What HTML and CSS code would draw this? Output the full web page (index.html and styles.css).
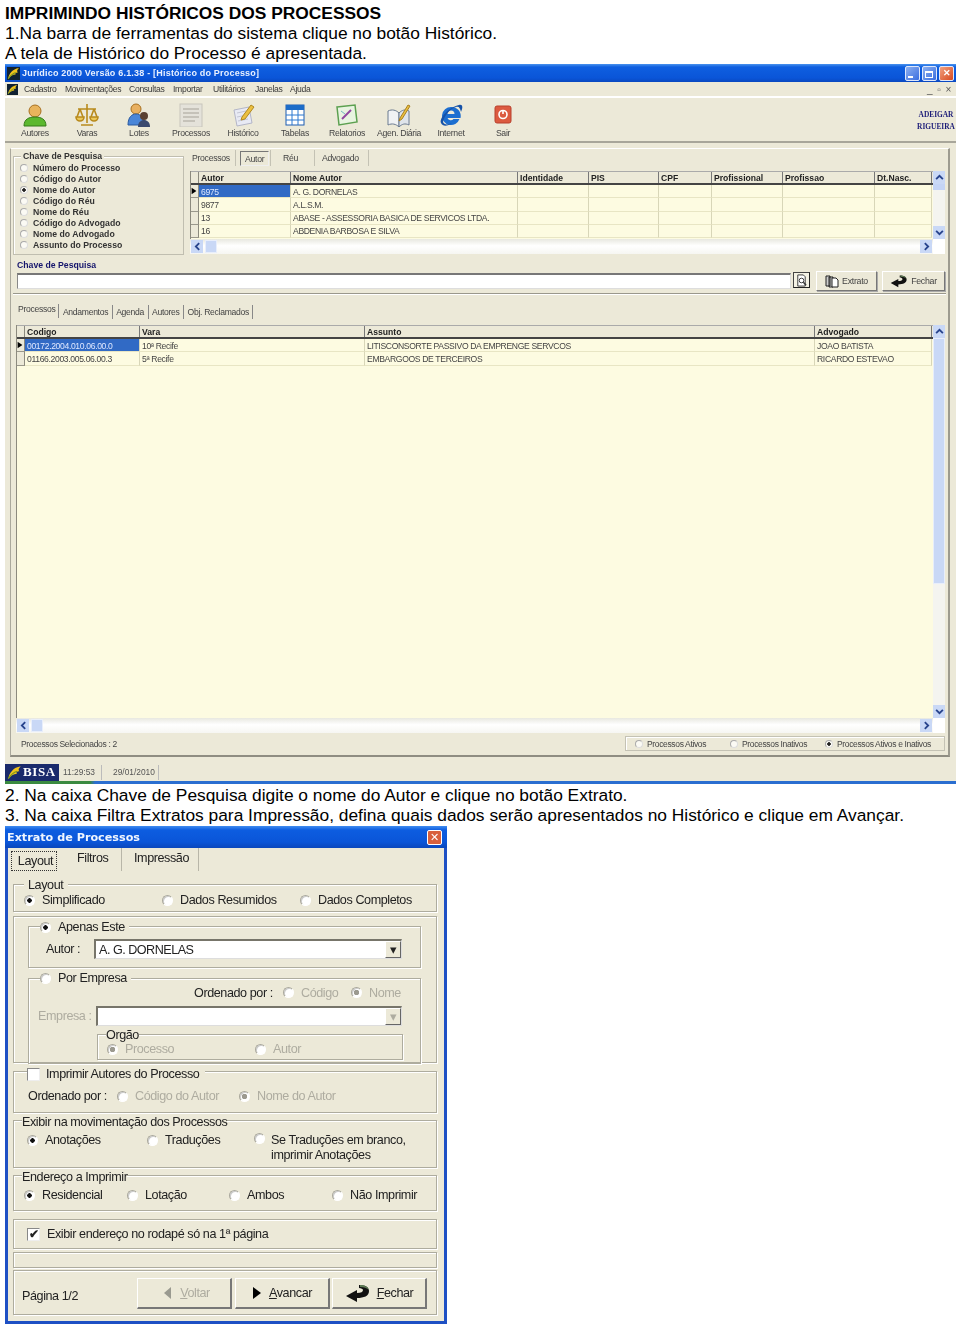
FILE: index.html
```html
<!DOCTYPE html>
<html lang="pt">
<head>
<meta charset="utf-8">
<title>Imprimindo históricos dos processos</title>
<link rel="stylesheet" href="styles.css">
</head>
<body>
<svg class="defs" width="0" height="0">
  <defs>
    <symbol id="flame" viewBox="0 0 12 12"><path d="M1 11C2 6 5 2 11 1 9 3 9 4 10 5 8 5 7 6 8 7 5 7 3 9 1 11Z" fill="#f2c21a"/><path d="M1 11C3 8 5 6 8 5" stroke="#7a9a20" fill="none"/></symbol>
    <symbol id="turn" viewBox="0 0 26 20"><path d="M14 2c6 0 10 2 10 6 0 5-5 7-12 7v4L1 13l11-6v3c4 0 6-1 6-3 0-1-2-2-4-2Z" fill="#111"/><path d="M15 2c5 0 8 2 9 5-2-2-5-3-9-3Z" fill="#5c7a52"/></symbol>
    <symbol id="radar" viewBox="0 0 10 10"><path d="M2 1 8 5 2 9Z" fill="#000"/></symbol>
    <symbol id="up" viewBox="0 0 8 8"><path d="M1 5.500 4 2.500l3 3" fill="none" stroke="#27438c" stroke-width="1.600"/></symbol>
    <symbol id="down" viewBox="0 0 8 8"><path d="M1 2.500 4 5.500l3-3" fill="none" stroke="#27438c" stroke-width="1.600"/></symbol>
    <symbol id="left" viewBox="0 0 8 8"><path d="M5.500 1 2.500 4l3 3" fill="none" stroke="#27438c" stroke-width="1.600"/></symbol>
    <symbol id="right" viewBox="0 0 8 8"><path d="M2.500 1l3 3-3 3" fill="none" stroke="#27438c" stroke-width="1.600"/></symbol>
  </defs>
</svg>

<h1 class="line heading">IMPRIMINDO HISTÓRICOS DOS PROCESSOS</h1>
<p class="line">1.Na barra de ferramentas do sistema clique no botão Histórico.</p>
<p class="line">A tela de Histórico do Processo é apresentada.</p>

<section class="win1">
  <header class="title1">
    <svg class="title-ico"><use href="#flame"/></svg>
    <span class="title1-text">Jurídico 2000 Versão 6.1.38 - [Histórico do Processo]</span>
    <span class="wbtns">
      <span class="wbtn"><i class="min"></i></span><span class="wbtn"><i class="max"></i></span><span class="wbtn close">✕</span>
    </span>
  </header>
  <nav class="menu">
    <svg class="menu-ico"><use href="#flame"/></svg>
    <span class="m1">Cadastro</span><span class="m2">Movimentações</span><span class="m3">Consultas</span><span class="m4">Importar</span><span class="m5">Utilitários</span><span class="m6">Janelas</span><span class="m7">Ajuda</span>
    <span class="mdi">_ &nbsp;▫ &nbsp;×</span>
  </nav>
  <div class="toolbar">
    <div class="tool"><svg class="ico" viewBox="0 0 24 24"><circle cx="12" cy="8" r="6" fill="#e8b45c" stroke="#a87020"/><path d="M1 23c0-7 5-9 11-9s11 2 11 9Z" fill="#5cb82e" stroke="#357a18"/></svg><span>Autores</span></div>
    <div class="tool"><svg class="ico" viewBox="0 0 24 24" fill="none" stroke="#b88a1c" stroke-width="1.6"><path d="M12 1v19M6 22h12M3 6h18M5 6 2 14M5 6l3 8M19 6l-3 8M19 6l3 8"/><path d="M1 14h8a4 4 0 0 1-8 0ZM15 14h8a4 4 0 0 1-8 0Z" fill="#ecc85a"/></svg><span>Varas</span></div>
    <div class="tool"><svg class="ico" viewBox="0 0 24 24"><circle cx="9" cy="6" r="5" fill="#e8b060" stroke="#a87020"/><path d="M1 22c0-8 4-11 8-11s8 3 8 11Z" fill="#4a86d8" stroke="#2a5aa0"/><circle cx="17" cy="13" r="4" fill="#5a4030"/><path d="M11 24c0-5 3-7 6-7s6 2 6 7Z" fill="#3a4a70"/></svg><span>Lotes</span></div>
    <div class="tool"><svg class="ico" viewBox="0 0 24 24"><rect x="1" y="1" width="22" height="23" fill="#e4e2da" stroke="#c8c6bc"/><path d="M4 6h16M4 10h16M4 14h16M4 18h12" stroke="#bab8ae" stroke-width="1.5"/></svg><span>Processos</span></div>
    <div class="tool"><svg class="ico" viewBox="0 0 24 24"><path d="M3 7 18 4l3 16-15 3Z" fill="#e8eaf4" stroke="#b4b6c8"/><path d="M6 10l9-2M6 14l10-2M7 18l10-2" stroke="#c4c6d4"/><path d="M11 14 20 2l3 2-9 12-4 1Z" fill="#ecc040" stroke="#b08820"/></svg><span>Histórico</span></div>
    <div class="tool"><svg class="ico" viewBox="0 0 24 24"><rect x="3" y="2" width="18" height="20" fill="#fff" stroke="#1c5cb0"/><rect x="3" y="2" width="18" height="5" fill="#1c6cc8"/><path d="M9 7v15M15 7v15M3 12h18M3 17h18" stroke="#2a78d0"/></svg><span>Tabelas</span></div>
    <div class="tool"><svg class="ico" viewBox="0 0 24 24"><path d="M2 4 20 2l2 17-18 3Z" fill="#e8f4e0" stroke="#5ca050" stroke-width="1.5"/><path d="M7 16l9-9" stroke="#9048a0" stroke-width="2"/><path d="M6 8l4 3" stroke="#70b8c0"/></svg><span>Relatorios</span></div>
    <div class="tool"><svg class="ico" viewBox="0 0 24 24"><path d="M1 8c4-2 8-1 11 2v14c-3-3-7-4-11-2Z" fill="#f0f2f4" stroke="#6a7a90"/><path d="M12 10c3-3 6-4 10-2v14c-4-2-7-1-10 2Z" fill="#dfe4ea" stroke="#6a7a90"/><path d="M13 15 21 2l2 1-8 13-3 2Z" fill="#ecc040" stroke="#a88020"/></svg><span>Agen. Diária</span></div>
    <div class="tool"><svg class="ico" viewBox="0 0 24 24"><path d="M12 4a9 9 0 1 0 8.5 12h-6a3.500 3.500 0 0 1-6-1h13A9 9 0 0 0 12 4Zm-3.500 7a3.500 3.500 0 0 1 7 0Z" fill="#1c6ed0"/><path d="M2 20C0 15 10 4 20 2c4-1 4 3 2 7-1-4-2-6-5-5C10 6 5 14 4 19c1 3 5 3 9 1-4 3-9 4-11 0Z" fill="#1652a8"/></svg><span>Internet</span></div>
    <div class="tool"><svg class="ico" viewBox="0 0 24 24"><rect x="4" y="3" width="16" height="17" rx="2" fill="#dc5a40" stroke="#b8402c"/><circle cx="12" cy="11.500" r="4" fill="none" stroke="#fff" stroke-width="1.600"/><path d="M12 7v4" stroke="#fff" stroke-width="1.600"/></svg><span>Sair</span></div>
    <div class="user">ADEIGAR<br>RIGUEIRA</div>
  </div>

  <main class="workspace">
    <div class="panel">
      <div class="search-top">
        <div class="gbox keys">
          <div class="legend lg-keys">Chave de Pesquisa</div>
          <label class="rk"><i class="r"></i>Número do Processo</label>
          <label class="rk"><i class="r"></i>Código do Autor</label>
          <label class="rk"><i class="r on"></i>Nome do Autor</label>
          <label class="rk"><i class="r"></i>Código do Réu</label>
          <label class="rk"><i class="r"></i>Nome do Réu</label>
          <label class="rk"><i class="r"></i>Código do Advogado</label>
          <label class="rk"><i class="r"></i>Nome do Advogado</label>
          <label class="rk"><i class="r"></i>Assunto do Processo</label>
        </div>
        <div class="search-right">
          <div class="tabs1">
            <span class="t1 t-proc">Processos</span>
            <span class="t1 t-autor"><b>Autor</b></span>
            <span class="t1 t-reu">Réu</span>
            <span class="t1 t-adv">Advogado</span>
          </div>
          <div class="dgrid dg1">
            <div class="dg-main">
              <div class="row head cols1"><i></i><span>Autor</span><span>Nome Autor</span><span>Identidade</span><span>PIS</span><span>CPF</span><span>Profissional</span><span>Profissao</span><span>Dt.Nasc.</span></div>
              <div class="row cols1"><i class="cur"><svg><use href="#radar"/></svg></i><span class="sel">6975</span><span>A. G. DORNELAS</span><span></span><span></span><span></span><span></span><span></span><span></span></div>
              <div class="row cols1"><i></i><span>9877</span><span>A.L.S.M.</span><span></span><span></span><span></span><span></span><span></span><span></span></div>
              <div class="row cols1"><i></i><span>13</span><span>ABASE - ASSESSORIA BASICA DE SERVICOS LTDA.</span><span></span><span></span><span></span><span></span><span></span><span></span></div>
              <div class="row cols1"><i></i><span>16</span><span>ABDENIA BARBOSA E SILVA</span><span></span><span></span><span></span><span></span><span></span><span></span></div>
            </div>
            <div class="vbar"><b><svg><use href="#up"/></svg></b><em class="thumb-a"></em><u></u><b><svg><use href="#down"/></svg></b></div>
            <div class="hbar"><b><svg><use href="#left"/></svg></b><em></em><u></u><b><svg><use href="#right"/></svg></b></div>
          </div>
        </div>
      </div>

      <div class="key-label">Chave de Pesquisa</div>
      <div class="key-row">
        <div class="key-input"></div>
        <div class="find"><svg viewBox="0 0 14 14" fill="none" stroke="#333"><path d="M3 1h6l2 2v10H3Z" fill="#fff"/><circle cx="7" cy="7" r="2.500"/><path d="M9 9l3 3" stroke-width="1.500"/></svg></div>
        <div class="btn1 extrato"><svg viewBox="0 0 14 14"><path d="M1 2h4v10H1ZM4 3h4v10H4Z" fill="#ccc" stroke="#222"/><path d="M7 4h4l2 2v7H7Z" fill="#fff" stroke="#222"/></svg>Extrato</div>
        <div class="btn1 fechar1"><svg><use href="#turn"/></svg>Fechar</div>
      </div>
      <div class="groove"></div>

      <div class="tabs2">
        <span class="t2 active">Processos</span><span class="t2">Andamentos</span><span class="t2">Agenda</span><span class="t2">Autores</span><span class="t2">Obj. Reclamados</span>
      </div>
      <div class="dgrid dg2">
        <div class="dg-main">
          <div class="row head cols2"><i></i><span>Codigo</span><span>Vara</span><span>Assunto</span><span>Advogado</span></div>
          <div class="row cols2"><i class="cur"><svg><use href="#radar"/></svg></i><span class="sel">00172.2004.010.06.00.0</span><span>10ª Recife</span><span>LITISCONSORTE PASSIVO DA EMPRENGE SERVCOS</span><span>JOAO BATISTA</span></div>
          <div class="row cols2"><i></i><span>01166.2003.005.06.00.3</span><span>5ª Recife</span><span>EMBARGOOS DE TERCEIROS</span><span>RICARDO ESTEVAO</span></div>
        </div>
        <div class="vbar"><b><svg><use href="#up"/></svg></b><em class="thumb-b"></em><u></u><b><svg><use href="#down"/></svg></b></div>
        <div class="hbar"><b><svg><use href="#left"/></svg></b><em></em><u></u><b><svg><use href="#right"/></svg></b></div>
      </div>
      <div class="foot1">
        <span class="selected">Processos Selecionados : 2</span>
        <div class="status-box">
          <label class="rs rs1"><i class="r"></i>Processos Ativos</label>
          <label class="rs rs2"><i class="r"></i>Processos Inativos</label>
          <label class="rs"><i class="r on"></i>Processos Ativos e Inativos</label>
        </div>
      </div>
    </div>
  </main>

  <footer class="statusbar">
    <div class="logo"><svg><use href="#flame"/></svg><span>BISA</span></div>
    <span class="cell c-time">11:29:53</span>
    <span class="cell c-date">29/01/2010</span>
  </footer>
  <div class="taskstripe"></div>
</section>

<p class="line line-a">2. Na caixa Chave de Pesquisa digite o nome do Autor e clique no botão Extrato.</p>
<p class="line">3. Na caixa Filtra Extratos para Impressão, defina quais dados serão apresentados no Histórico e clique em Avançar.</p>

<section class="win2">
  <header class="title2"><span>Extrato de Processos</span><span class="close2">✕</span></header>
  <div class="tabs3">
    <span class="t3 active"><b>Layout</b></span><span class="t3 filtros">Filtros</span><span class="t3 impressao">Impressão</span>
  </div>

  <div class="g g-layout">
    <div class="lgd lgd-layout">Layout</div>
    <div class="opts opts-layout">
      <label class="o"><i class="rb on"></i>Simplificado</label>
      <label class="o"><i class="rb"></i>Dados Resumidos</label>
      <label class="o"><i class="rb"></i>Dados Completos</label>
    </div>
  </div>

  <div class="g g-who">
    <div class="g g-este">
      <label class="o lgd-radio lr-este"><i class="rb on"></i>Apenas Este</label>
      <div class="combo-row este-row">
        <span class="autor-lbl">Autor :</span>
        <div class="combo combo-autor"><span>A. G. DORNELAS</span><b>▾</b></div>
      </div>
    </div>
    <div class="g g-emp">
      <label class="o lgd-radio lr-emp"><i class="rb"></i>Por Empresa</label>
      <div class="ordem-row">
        <span class="ord-lbl">Ordenado por :</span>
        <label class="o dis ord-c"><i class="rb"></i>Código</label>
        <label class="o dis"><i class="rb on"></i>Nome</label>
      </div>
      <div class="combo-row emp-row">
        <span class="emp-lbl dis">Empresa :</span>
        <div class="combo combo-emp"><span></span><b class="dis">▾</b></div>
      </div>
      <div class="g g-org">
        <div class="lgd lgd-org">Orgão</div>
        <div class="org-opts">
          <label class="o dis"><i class="rb on"></i>Processo</label>
          <label class="o dis"><i class="rb"></i>Autor</label>
        </div>
      </div>
    </div>
  </div>

  <div class="g g-print">
    <label class="o lgd-radio lr-print"><i class="cb"></i>Imprimir Autores do Processo</label>
    <div class="print-row">
      <span class="print-lbl">Ordenado por :</span>
      <label class="o dis p-c"><i class="rb"></i>Código do Autor</label>
      <label class="o dis"><i class="rb on"></i>Nome do Autor</label>
    </div>
  </div>

  <div class="g g-mov">
    <div class="lgd lgd-mov">Exibir na movimentação dos Processos</div>
    <div class="mov-row">
      <label class="o"><i class="rb on"></i>Anotações</label>
      <label class="o"><i class="rb"></i>Traduções</label>
      <label class="o o-top"><i class="rb"></i><span>Se Traduções em branco,<br>imprimir Anotações</span></label>
    </div>
  </div>

  <div class="g g-end">
    <div class="lgd lgd-mov">Endereço a Imprimir</div>
    <div class="end-row">
      <label class="o"><i class="rb on"></i>Residencial</label>
      <label class="o"><i class="rb"></i>Lotação</label>
      <label class="o"><i class="rb"></i>Ambos</label>
      <label class="o"><i class="rb"></i>Não Imprimir</label>
    </div>
  </div>

  <div class="g g-foot"><label class="o"><i class="cb checked">✔</i>Exibir endereço no rodapé só na 1ª página</label></div>
  <div class="g g-thin"></div>

  <div class="g g-nav">
    <span class="page">Página 1/2</span>
    <div class="navbtns">
      <div class="nb dis nb-v"><svg class="tri"><path d="M9 1 2 7l7 6Z" fill="#9a9a90"/></svg><span><u>V</u>oltar</span></div>
      <div class="nb"><svg class="tri"><path d="M2 1l8 6-8 6Z" fill="#000"/></svg><span><u>A</u>vancar</span></div>
      <div class="nb"><svg class="turn"><use href="#turn"/></svg><span><u>F</u>echar</span></div>
    </div>
  </div>
</section>
</body>
</html>
```
FILE: styles.css
```css
* { box-sizing: border-box; }
html, body { margin: 0; padding: 0; }
body { width: 960px; height: 1329px; overflow: hidden; background: #fff; color: #000; font-family: "Liberation Sans", Arial, sans-serif; padding-top: 3px; }
.defs { display: block; height: 0; }
.line { margin: 0 0 0 5px; font-size: 17.38px; line-height: 20px; font-weight: 400; white-space: nowrap; }
.heading { font-weight: 700; font-size: 17.38px; }
.line-a { margin-top: 1px; }

/* main window */
.win1 { margin: 1px 0 0 5px; width: 951px; height: 720px; background: #ece9d8; display: flex; flex-direction: column; overflow: hidden; font-size: 9px; color: #333; filter: blur(.35px); }
.title1 { height: 18px; flex: none; display: flex; align-items: center; background: linear-gradient(#4a93ee 0, #0f5fe0 3px, #0a55d8 14px, #0a48c0 100%); color: #fff; padding: 0 2px 0 2px; }
.title-ico { width: 13px; height: 13px; background: #123; }
.title1-text { margin-left: 2px; font-weight: 700; font-size: 9px; letter-spacing: .2px; color: #e8f0ff; }
.wbtns { margin-left: auto; display: flex; gap: 2px; }
.wbtn { width: 15px; height: 15px; border-radius: 2px; background: linear-gradient(135deg, #8db0f0, #3a6ee0); border: 1px solid #dfe8fb; display: flex; align-items: flex-end; padding: 2px; }
.min { display: block; width: 5px; height: 2px; background: #fff; }
.max { display: block; width: 8px; height: 7px; border: 1px solid #fff; border-top-width: 2px; }
.wbtn.close { background: linear-gradient(135deg, #f0a080, #d84a20); color: #fff; font-size: 9px; align-items: center; justify-content: center; padding: 0; font-weight: 700; }
.menu { height: 15px; flex: none; display: flex; align-items: center; background: #ece9d8; border-bottom: 1px solid #fff; padding-left: 2px; color: #3a3a3a; font-size: 8.6px; letter-spacing: -.3px; }
.menu-ico { width: 11px; height: 11px; background: #123; margin-right: 6px; }
.menu span { white-space: nowrap; }
.m1 { width: 41px; } .m2 { width: 64px; } .m3 { width: 44px; } .m4 { width: 40px; } .m5 { width: 42px; } .m6 { width: 35px; }
.menu .mdi { margin-left: auto; margin-right: 5px; color: #555; font-size: 10px; }
.toolbar { height: 46px; flex: none; display: flex; align-items: flex-start; padding: 6px 0 0 4px; background: #ece9d8; border-bottom: 2px solid #a8a69a; box-shadow: inset 0 1px 0 #fff; position: relative; }
.tool { width: 52px; flex: none; display: flex; flex-direction: column; align-items: center; font-size: 8.7px; line-height: 9px; letter-spacing: -.3px; color: #444; white-space: nowrap; }
.ico { width: 24px; height: 24px; display: block; margin-bottom: 2px; }
.user { margin-left: auto; width: 40px; margin-top: 6px; white-space: nowrap; font-family: "Liberation Serif", serif; font-weight: 700; font-size: 7.4px; line-height: 12px; color: #1c1c78; text-align: center; }

.workspace { flex: 1; min-height: 0; padding: 5px 6px 6px 5px; }
.panel { height: 100%; border: 1px solid #aaa89c; border-right-width: 2px; border-bottom-width: 2px; border-right-color: #9d9b8f; border-bottom-color: #8f8d82; border-top-color: #fff; padding: 1px 2px 0 1px; }
.search-top { display: flex; gap: 6px; align-items: flex-start; }
.gbox { border: 1px solid #c0beb0; box-shadow: 1px 1px 0 #fff inset; }
.keys { width: 171px; height: 99px; margin: 6px 0 0 1px; padding: 0 0 0 6px; }
.legend { width: fit-content; margin: -6px 0 0 1px; padding: 0 2px; background: #ece9d8; height: 11px; font-weight: 700; font-size: 8.7px; color: #333; }
.rk { display: flex; align-items: center; height: 11.1px; font-weight: 700; font-size: 8.7px; color: #333; white-space: nowrap; gap: 5px; }
.r { display: block; flex: none; width: 8px; height: 8px; border-radius: 50%; background: #fbfaf4; border: 1px solid #aaa; border-right-color: #ddd; border-bottom-color: #ddd; }
.r.on { background: radial-gradient(circle, #222 0 1.500px, #fbfaf4 2px); }
.search-right { width: 755px; }
.tabs1 { height: 21px; display: flex; align-items: flex-start; font-size: 8.7px; letter-spacing: -.3px; color: #444; }
.t1 { display: flex; align-items: center; height: 16px; border-right: 1px solid #c4c2b4; white-space: nowrap; }
.t-proc { width: 45px; padding-left: 2px; border: 0; }
.t-autor { width: 36px; padding-right: 5px; border-left: 1px solid #c4c2b4; padding-left: 5px; }
.t-autor b { font-weight: 400; display: block; border: 1px solid #777; border-right-color: #eee; border-bottom-color: #eee; padding: 2px 4px; height: 15px; margin-left: -1px; }
.t-reu { width: 44px; padding-left: 12px; border-right: 1px solid #c4c2b4; }
.t-adv { width: 54px; padding-left: 7px; }

.dgrid { display: grid; background: #fff; }
.dg1 { width: 755px; height: 83px; grid-template-columns: 743px 12px; grid-template-rows: 68px 15px; }
.dg2 { width: 929px; height: 408px; margin-left: 4px; grid-template-columns: 917px 12px; grid-template-rows: 393px 15px; }
.dg-main { background: #fdfbe1; overflow: hidden; border-left: 1px solid #8c8a7e; }
.row { display: grid; height: 13.3px; font-size: 8.6px; letter-spacing: -.35px; color: #444; }
.cols1 { grid-template-columns: 8px 92px 227px 71px 70px 53px 71px 92px 57px; }
.cols2 { grid-template-columns: 8px 115px 225px 450px 117px; }
.row > span, .row > i { border-right: 1px solid #d8d6b8; border-bottom: 1px solid #e8e5c4; padding: 1.5px 0 0 2px; white-space: nowrap; overflow: hidden; line-height: 10px; display: block; font-style: normal; }
.row > i { background: #ece9d8; border-right: 1px solid #8c8a7e; border-bottom: 1px solid #9a988c; padding: 0; }
.row > i svg { width: 8px; height: 10px; display: block; margin: 1px 0 0 -1px; }
.row .sel { background: #316ac5; color: #dfe8ff; }
.head { height: 14px; background: #ece9d8; border-bottom: 2px solid #444; border-top: 1px solid #aaa; }
.row.head > span { font-weight: 700; font-size: 8.6px; letter-spacing: 0; color: #222; background: #ece9d8; border-right: 1px solid #777; border-bottom: 0; padding-top: 1px; }
.row.head > i { border-bottom: 0; }
.vbar { grid-row: 1; grid-column: 2; display: flex; flex-direction: column; background: #f4f4f0; }
.vbar b, .hbar b { display: flex; align-items: center; justify-content: center; flex: none; width: 12px; height: 13px; background: #c9d8f6; }
.vbar svg, .hbar svg { width: 9px; height: 9px; display: block; }
.vbar u, .hbar u { flex: 1; }
.thumb-a { flex: none; height: 6px; background: #c4d4f6; }
.thumb-b { flex: none; height: 246px; background: #c9d8f6; border: 1px solid #e8eefb; }
.hbar { grid-row: 2; grid-column: 1; display: flex; align-items: center; background: linear-gradient(#e8e8e0, #fff 45%, #f6f6f2); padding: 0 1px 0 1px; }
.hbar em { flex: none; width: 12px; height: 13px; margin-left: 2px; background: #c9d8f6; border: 1px solid #e8eefb; }

.key-label { margin: 5px 0 0 5px; height: 12px; font-weight: 700; font-size: 8.7px; line-height: 11px; color: #15156c; }
.key-row { display: flex; align-items: flex-start; height: 21px; margin-left: 5px; }
.key-input { width: 774px; height: 16px; margin-top: 1px; background: #fff; border: 1px solid #888; border-right-color: #ddd; border-bottom-color: #ddd; border-top: 2px solid #777; }
.find { width: 17px; height: 16px; margin: 0 0 0 2px; background: #f4f2e4; border: 1px solid #444; border-right-color: #222; border-bottom-color: #222; padding: 1px 0 0 1px; }
.find svg { width: 13px; height: 13px; display: block; }
.btn1 { height: 20px; margin-top: -1px; display: flex; align-items: center; justify-content: center; gap: 3px; font-size: 8.8px; letter-spacing: -.3px; color: #444; background: #ece9d8; border: 1px solid #fff; border-right-color: #777; border-bottom-color: #777; box-shadow: 1px 1px 0 #aaa; }
.btn1 svg { width: 14px; height: 14px; flex: none; }
.extrato { width: 61px; margin-left: 6px; }
.fechar1 { width: 63px; margin-left: 5px; }
.fechar1 svg { width: 18px; }
.groove { height: 2px; margin: 0 0 0 1px; border-top: 1px solid #9a988c; border-bottom: 1px solid #fff; }
.tabs2 { height: 16px; display: flex; align-items: center; margin: 9px 0 5px 5px; font-size: 8.6px; letter-spacing: -.3px; color: #444; }
.t2 { display: block; padding: 0 3.5px; white-space: nowrap; border-right: 1px solid #888; height: 14px; line-height: 14px; }
.t2.active { padding: 0 3px 0 1px; margin-top: -3px; line-height: 11px; }
.foot1 { display: flex; align-items: center; justify-content: space-between; height: 20px; padding: 1px 1px 0 9px; font-size: 8.5px; letter-spacing: -.35px; color: #444; }
.status-box { width: 320px; height: 15px; border: 1px solid #c4c2b4; box-shadow: inset 1px 1px 0 #fff; display: flex; align-items: center; padding-left: 9px; white-space: nowrap; }
.rs { display: flex; align-items: center; gap: 4px; }
.rs1 { width: 95px; } .rs2 { width: 95px; }
.statusbar { height: 18px; flex: none; display: flex; align-items: center; font-size: 8.4px; color: #555; background: #ece9d8; }
.logo { width: 54px; height: 17px; background: #1a2a6c; display: flex; align-items: center; gap: 1px; padding-left: 2px; color: #fff; font-family: "Liberation Serif", serif; font-weight: 700; font-size: 13px; letter-spacing: .6px; }
.logo svg { width: 15px; height: 15px; flex: none; }
.cell { display: block; height: 15px; line-height: 15px; border-right: 1px solid #bbb; padding-left: 3px; white-space: nowrap; }
.c-time { width: 43px; padding-left: 4px; } .c-date { width: 57px; padding-left: 11px; }
.taskstripe { height: 3px; flex: none; background: linear-gradient(90deg, #3a8a40 0, #3a8a40 85px, #2a6ed0 90px, #2a6ed0 100%); }

/* dialog */
.win2 { margin: 1px 0 0 5px; width: 442px; height: 498px; background: #ece9d8; border: 3px solid #1e50c4; border-top: 0; font-size: 12.6px; letter-spacing: -.42px; color: #222; white-space: nowrap; filter: blur(.35px); }
.title2 { margin: 0 -3px; height: 22px; display: flex; align-items: center; justify-content: space-between; padding: 1px 5px 0 2px; background: linear-gradient(#3f8cf0 0, #0d5de0 4px, #0a55d8 16px, #0a47bc 100%); color: #f0f6ff; font-family: "DejaVu Sans", sans-serif; font-weight: 700; font-size: 11.2px; letter-spacing: 0; }
.close2 { width: 15px; height: 15px; display: flex; align-items: center; justify-content: center; border: 1px solid #fff; border-radius: 2px; background: #d8603c; color: #fff; font-size: 11px; }
.tabs3 { display: flex; height: 23px; align-items: stretch; padding-left: 3px; }
.t3 { display: flex; align-items: center; border-right: 1px solid #b8b6a8; padding-bottom: 3px; }
.t3.active { width: 46px; margin-right: 8px; border: 0; padding: 3px 0 0 0; }
.t3.active b { display: block; font-weight: 400; width: 100%; height: 20px; line-height: 19px; padding-left: 3px; text-align: center; border: 1px dotted #333; }
.filtros { width: 57px; padding-left: 12px; }
.impressao { width: 77px; padding-left: 12px; }
.g { border: 1px solid #aeac9e; box-shadow: inset 1px 1px 0 #fff, 1px 1px 0 #fff; }
.win2 > .g { margin-left: 5px; width: 424px; }
.o { display: flex; align-items: center; gap: 7px; }
.rb { display: block; flex: none; width: 11px; height: 11px; border-radius: 50%; background: #fff; border: 1px solid #aaa89c; border-right-color: #fff; border-bottom-color: #fff; box-shadow: inset 1px 1px 0 #ccc; }
.rb.on { background: radial-gradient(circle, #111 0 2px, #fff 2.500px); }
.dis { color: #aeaca0; }
.dis .rb.on { background: radial-gradient(circle, #9c9a90 0 2.500px, #fff 3px); }
.lgd { width: fit-content; background: #ece9d8; line-height: 13px; height: 13px; }
.lgd-layout { margin: -6px 0 0 10px; padding: 0 5px 0 4px; }
.g-layout { margin-top: 13px; height: 28px; }
.opts-layout { display: grid; grid-template-columns: 138px 138px 1fr; padding-left: 10px; margin-top: 1px; }
.g-who { margin-top: 4px; height: 147px; padding: 9px 0 0 14px; }
.g-este, .g-emp { width: 393px; }
.g-este { height: 42px; }
.lgd-radio { width: fit-content; background: #ece9d8; padding: 0 4px 0 0; height: 14px; }
.lr-este { margin: -7px 0 0 11px; padding-left: 0; }
.lr-emp { margin: -8px 0 0 11px; }
.este-row { margin-top: 5px; display: flex; align-items: center; }
.autor-lbl { margin-left: 17px; width: 48px; }
.combo { display: flex; justify-content: space-between; align-items: stretch; background: #fff; border: 2px solid #77756a; border-right: 1px solid #ddd; border-bottom: 1px solid #ddd; }
.combo span { padding: 1px 0 0 3px; font-size: 12.6px; letter-spacing: -.5px; line-height: 16px; }
.combo b { width: 16px; background: #ece9d8; display: flex; align-items: center; justify-content: center; font-size: 13px; border: 1px solid #fff; border-right-color: #666; border-bottom-color: #666; font-weight: 400; line-height: 1; }
.combo-autor { width: 308px; height: 20px; }
.g-emp { height: 86px; margin-top: 10px; }
.ordem-row { display: flex; align-items: center; margin-top: 0; padding-left: 165px; height: 15px; }
.ord-lbl { width: 89px; }
.ord-c { width: 68px; }
.emp-row { display: flex; align-items: center; margin-top: 6px; padding-left: 9px; }
.emp-lbl { width: 58px; }
.combo-emp { width: 306px; height: 20px; }
.g-org { width: 306px; height: 26px; margin: 8px 0 0 68px; }
.lgd-org { margin: -5px 0 0 8px; height: 11px; line-height: 11px; padding: 0; color: #222; }
.org-opts { display: grid; grid-template-columns: 148px 1fr; padding-left: 9px; margin-top: 1px; }
.g-print { margin-top: 8px; height: 42px; }
.lr-print { margin: -5px 0 0 13px; padding-right: 6px; gap: 6px; }
.cb { display: flex; align-items: center; justify-content: center; flex: none; width: 13px; height: 13px; background: #fff; border: 1px solid #888; border-right-color: #eee; border-bottom-color: #eee; font-style: normal; font-size: 12px; font-weight: 700; line-height: 1; overflow: hidden; }
.print-row { display: flex; align-items: center; padding-left: 14px; margin-top: 8px; }
.print-lbl { width: 89px; }
.p-c { width: 122px; }
.g-mov { margin-top: 7px; height: 48px; }
.lgd-mov { margin: -5px 0 0 8px; padding-right: 0; }
.mov-row { display: grid; grid-template-columns: 120px 107px 1fr; align-items: start; padding-left: 13px; margin-top: 4px; }
.o-top { align-items: flex-start; gap: 6px; }
.o-top span { line-height: 15px; }
.g-end { margin-top: 7px; height: 36px; }
.end-row { display: grid; grid-template-columns: 103px 102px 103px 1fr; padding-left: 10px; margin-top: 4px; }
.g-foot { margin-top: 8px; height: 30px; padding: 7px 0 0 13px; }
.g-thin { margin-top: 3px; height: 16px; }
.g-nav { margin-top: 2px; height: 45px; display: flex; align-items: flex-start; padding: 7px 0 0 8px; }
.page { display: block; width: 115px; margin-top: 11px; height: 15px; line-height: 15px; }
.navbtns { display: flex; gap: 2.5px; }
.nb { width: 95px; height: 31px; display: flex; align-items: center; justify-content: center; gap: 6px; background: #ece9d8; border: 1px solid #fff; border-right: 2px solid #777; border-bottom: 2px solid #777; }
.nb-v { padding-left: 4px; }
.nb u { text-decoration: underline; }
.tri { width: 12px; height: 14px; flex: none; }
.turn { width: 26px; height: 20px; flex: none; }
```
